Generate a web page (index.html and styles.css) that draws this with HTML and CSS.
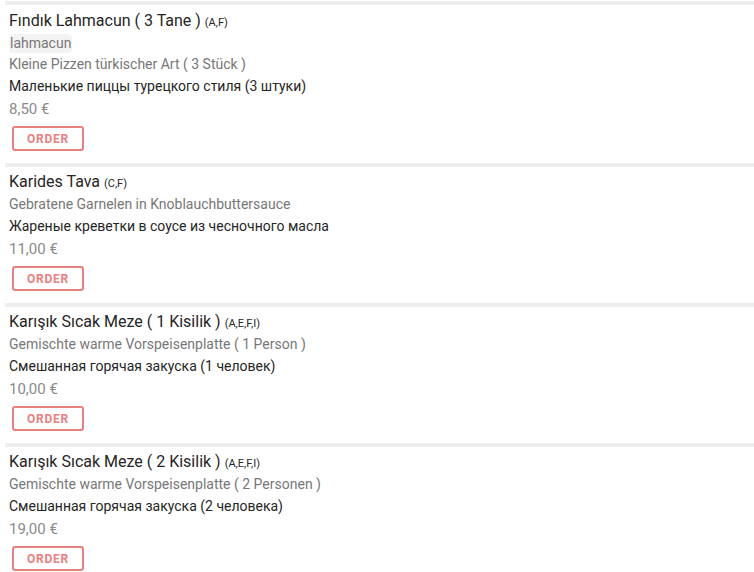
FILE: index.html
```html
<!DOCTYPE html>
<html lang="en">
<head>
    <meta charset="UTF-8">
    <title>Menu</title>
    <link rel="stylesheet" href="styles.css">
</head>
<body>
    <div class="menu-list">
        <div class="menu-item">
            <div class="item-title">Fındık Lahmacun ( 3 Tane ) <span class="allergens">(A,F)</span></div>
            <div class="item-tags"><span class="tag">lahmacun</span></div>
            <div class="item-de">Kleine Pizzen türkischer Art ( 3 Stück )</div>
            <div class="item-ru">Маленькие пиццы турецкого стиля (3 штуки)</div>
            <div class="item-price">8,50 €</div>
            <button class="btn-order">ORDER</button>
        </div>
        <div class="menu-item">
            <div class="item-title">Karides Tava <span class="allergens">(C,F)</span></div>
            <div class="item-de">Gebratene Garnelen in Knoblauchbuttersauce</div>
            <div class="item-ru">Жареные креветки в соусе из чесночного масла</div>
            <div class="item-price">11,00 €</div>
            <button class="btn-order">ORDER</button>
        </div>
        <div class="menu-item">
            <div class="item-title">Karışık Sıcak Meze ( 1 Kisilik ) <span class="allergens">(A,E,F,I)</span></div>
            <div class="item-de">Gemischte warme Vorspeisenplatte ( 1 Person )</div>
            <div class="item-ru">Смешанная горячая закуска (1 человек)</div>
            <div class="item-price">10,00 €</div>
            <button class="btn-order">ORDER</button>
        </div>
        <div class="menu-item">
            <div class="item-title">Karışık Sıcak Meze ( 2 Kisilik ) <span class="allergens">(A,E,F,I)</span></div>
            <div class="item-de">Gemischte warme Vorspeisenplatte ( 2 Personen )</div>
            <div class="item-ru">Смешанная горячая закуска (2 человека)</div>
            <div class="item-price">19,00 €</div>
            <button class="btn-order">ORDER</button>
        </div>
    </div>
</body>
</html>
```

FILE: styles.css
```css
:root {
    --text-color: #262626;
    --muted-color: #777777;
    --accent-color: #e88080;
    --divider-color: #eeeeee;
}

* {
    margin: 0;
    padding: 0;
    box-sizing: border-box;
}

body {
    font-family: Roboto, 'Liberation Sans', sans-serif;
    background: #fff;
    color: var(--text-color);
    padding-top: 1px;
}

.menu-list {
    margin-left: 5px;
}

.menu-item {
    border-top: 4px solid var(--divider-color);
    padding: 3px 4px 12px;
}

.menu-item:first-child {
    padding-top: 4px;
}

.item-title {
    font-size: 16px;
    line-height: 23px;
}

.allergens {
    font-size: 11px;
    line-height: 1;
}

.item-tags {
    line-height: 21px;
}

.tag {
    display: inline-block;
    background: #f3f3f3;
    color: var(--muted-color);
    font-size: 14px;
    line-height: 19px;
    padding: 0 1px;
    border-radius: 4px;
    vertical-align: middle;
}

.item-de {
    font-size: 14px;
    line-height: 22px;
    color: var(--muted-color);
}

.item-ru {
    font-size: 14px;
    line-height: 23px;
}

.item-price {
    font-size: 15px;
    line-height: 22px;
    color: #8a8a8a;
}

.btn-order {
    display: block;
    margin: 6px 0 0 3px;
    width: 72px;
    height: 25px;
    background: #fff;
    border: 2px solid var(--accent-color);
    border-radius: 3px;
    color: var(--accent-color);
    font-family: Roboto, 'Liberation Sans', sans-serif;
    font-size: 12px;
    font-weight: 700;
    letter-spacing: 0.8px;
    cursor: pointer;
}
```
